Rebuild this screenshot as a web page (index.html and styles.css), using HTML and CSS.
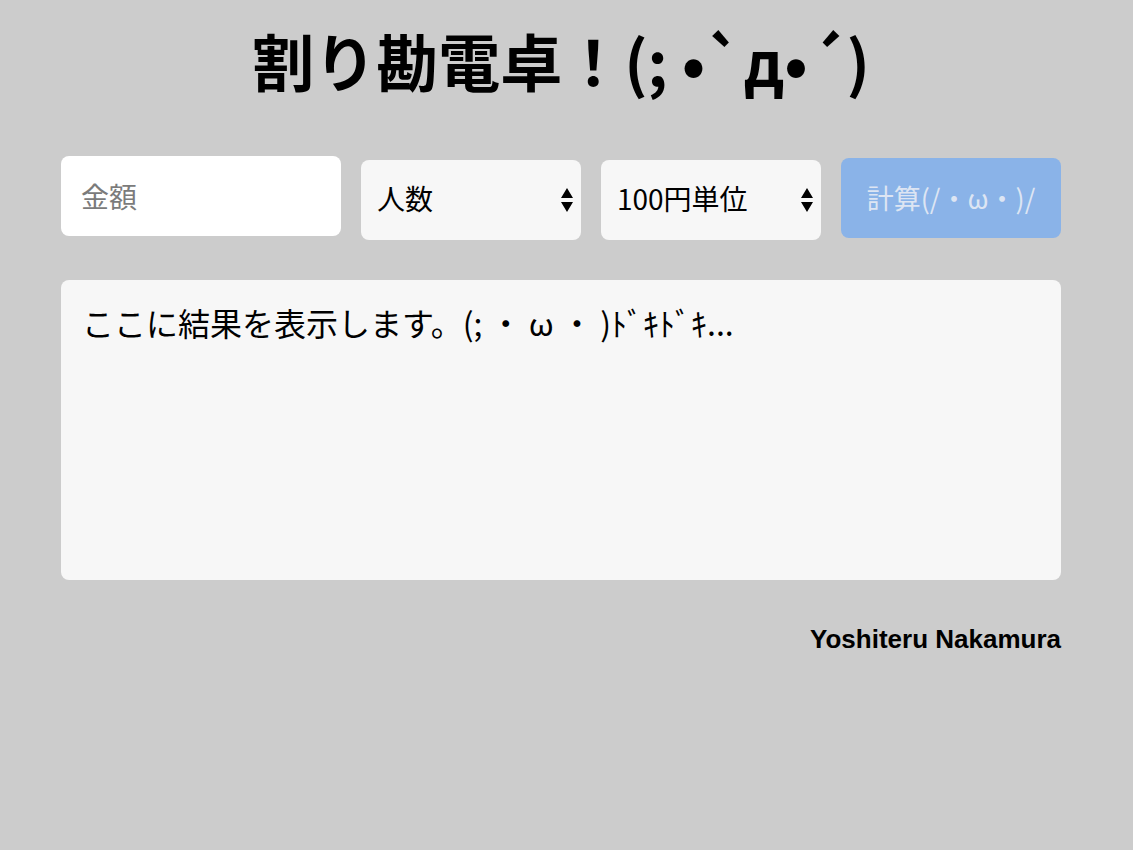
FILE: index.html
```html
<!DOCTYPE html>
<html lang="ja">
<head>
<meta charset="utf-8">
<title>割り勘電卓</title>
<link rel="stylesheet" href="styles.css">
</head>
<body>
<div class="container">
  <h1 class="title">割り勘電卓！(; •`д•´)</h1>
  <div class="controls">
    <input class="amount" type="text" placeholder="金額">
    <div class="select-wrap">
      <select class="select"><option>人数</option></select>
      <svg class="arrows" width="12" height="26" viewBox="0 0 12 26"><path d="M6 1 L12 11 L0 11 Z M6 25 L12 15 L0 15 Z" fill="#000"/></svg>
    </div>
    <div class="select-wrap">
      <select class="select"><option>100円単位</option></select>
      <svg class="arrows" width="12" height="26" viewBox="0 0 12 26"><path d="M6 1 L12 11 L0 11 Z M6 25 L12 15 L0 15 Z" fill="#000"/></svg>
    </div>
    <button class="calc" disabled>計算(/・ω・)/</button>
  </div>
  <div class="result">ここに結果を表示します。(; ・ ω ・ )ﾄﾞｷﾄﾞｷ...</div>
  <div class="author">Yoshiteru Nakamura</div>
</div>
</body>
</html>
```
FILE: styles.css
```css
html, body {
  margin: 0;
  padding: 0;
  background: #cccccc;
}
body {
  font-family: "Noto Sans CJK JP", "Noto Sans", sans-serif;
  color: #000;
}
.container {
  width: 1000px;
  margin-left: 61px;
  padding-top: 18px;
}
.title {
  margin: 0;
  text-align: center;
  font-size: 62px;
  font-weight: 700;
  line-height: 84px;
}
.controls {
  display: flex;
  gap: 20px;
  margin-top: 54px;
  align-items: flex-start;
}
.amount {
  box-sizing: border-box;
  width: 280px;
  height: 80px;
  border: none;
  border-radius: 8px;
  background: #ffffff;
  padding: 0 20px;
  font-family: inherit;
  font-size: 28px;
  outline: none;
}
.amount::placeholder {
  color: #7b7b7b;
}
.select-wrap {
  position: relative;
  width: 220px;
  height: 80px;
  margin-top: 4px;
}
.select {
  appearance: none;
  -webkit-appearance: none;
  box-sizing: border-box;
  width: 100%;
  height: 100%;
  border: none;
  border-radius: 8px;
  background: #f7f7f7;
  padding: 0 16px 5px;
  font-family: inherit;
  font-size: 28px;
  color: #000;
}
.arrows {
  position: absolute;
  right: 8px;
  top: 27px;
  pointer-events: none;
}
.calc {
  box-sizing: border-box;
  width: 220px;
  height: 80px;
  margin-top: 2px;
  border: none;
  border-radius: 8px;
  background: #8ab3e8;
  color: #dde5f3;
  font-family: inherit;
  font-size: 27px;
  padding: 0 0 2px;
}
.result {
  box-sizing: border-box;
  margin-top: 40px;
  height: 300px;
  background: #f7f7f7;
  border-radius: 8px;
  padding: 18px 21px;
  font-size: 32px;
  line-height: 48px;
}
.author {
  margin-top: 44px;
  text-align: right;
  font-family: "Liberation Sans", Arial, sans-serif;
  font-weight: 700;
  font-size: 26px;
  line-height: 30px;
}
```
